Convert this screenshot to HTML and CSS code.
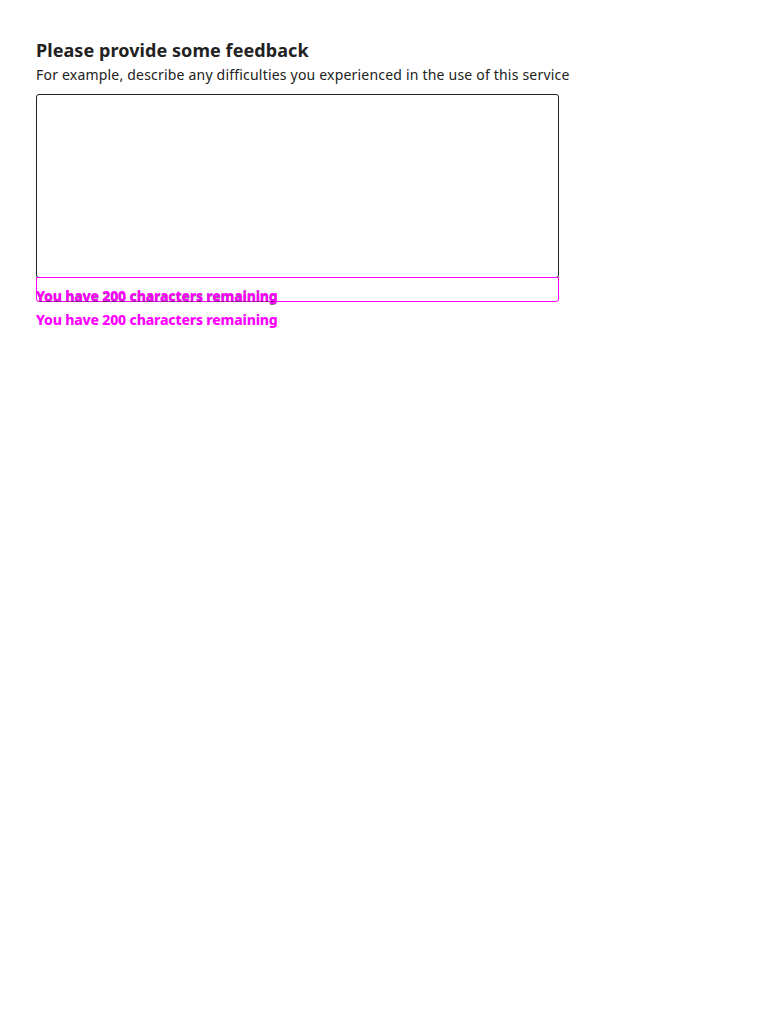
FILE: index.html
```html
<!DOCTYPE html>
<html lang="en">
<head>
<meta charset="utf-8">
<title>Feedback</title>
<link rel="stylesheet" href="styles.css">
</head>
<body>
<main class="page">
  <form class="field">
    <label class="label" for="fb">Please provide some feedback</label>
    <p class="hint">For example, describe any difficulties you experienced in the use of this service</p>
    <div class="area-wrap">
      <textarea id="fb" class="area"></textarea>
      <div class="count-box"><span class="count shadowed">You have 200 characters remaining</span></div>
    </div>
    <p class="count">You have 200 characters remaining</p>
  </form>
</main>
</body>
</html>
```
FILE: styles.css
```css
html, body {
  margin: 0;
  padding: 0;
  background: #fff;
}
body {
  font-family: "Noto Sans", "Open Sans", sans-serif;
  color: #222;
}
.page {
  padding: 38px 36px;
}
.field {
  display: flex;
  flex-direction: column;
  width: 523px;
}
.label {
  font-size: 18px;
  font-weight: 700;
  line-height: 25px;
  letter-spacing: 0.07px;
  color: #222;
}
.hint {
  margin: 0 0 7px;
  font-size: 14px;
  line-height: 24px;
  letter-spacing: 0.2px;
  white-space: nowrap;
}
.area-wrap {
  display: flex;
  flex-direction: column;
}
.area {
  box-sizing: border-box;
  width: 523px;
  height: 184px;
  margin: 0;
  border: 1px solid #222;
  border-radius: 3px;
  resize: none;
  font: inherit;
}
.count-box {
  box-sizing: border-box;
  height: 25px;
  margin-top: -1px;
  border: 1px solid #f0f;
  border-radius: 0 0 3px 3px;
  position: relative;
}
.count {
  margin: 0;
  font-size: 14px;
  font-weight: 800;
  line-height: 24px;
  letter-spacing: -0.2px;
  color: #f0f;
  white-space: nowrap;
}
.count-box .count {
  position: absolute;
  left: -1px;
  top: 6px;
}
.field > .count {
  margin-top: 6px;
}
.shadowed {
  text-shadow: 0 1px 0 rgba(34, 34, 34, 0.6);
}
```
